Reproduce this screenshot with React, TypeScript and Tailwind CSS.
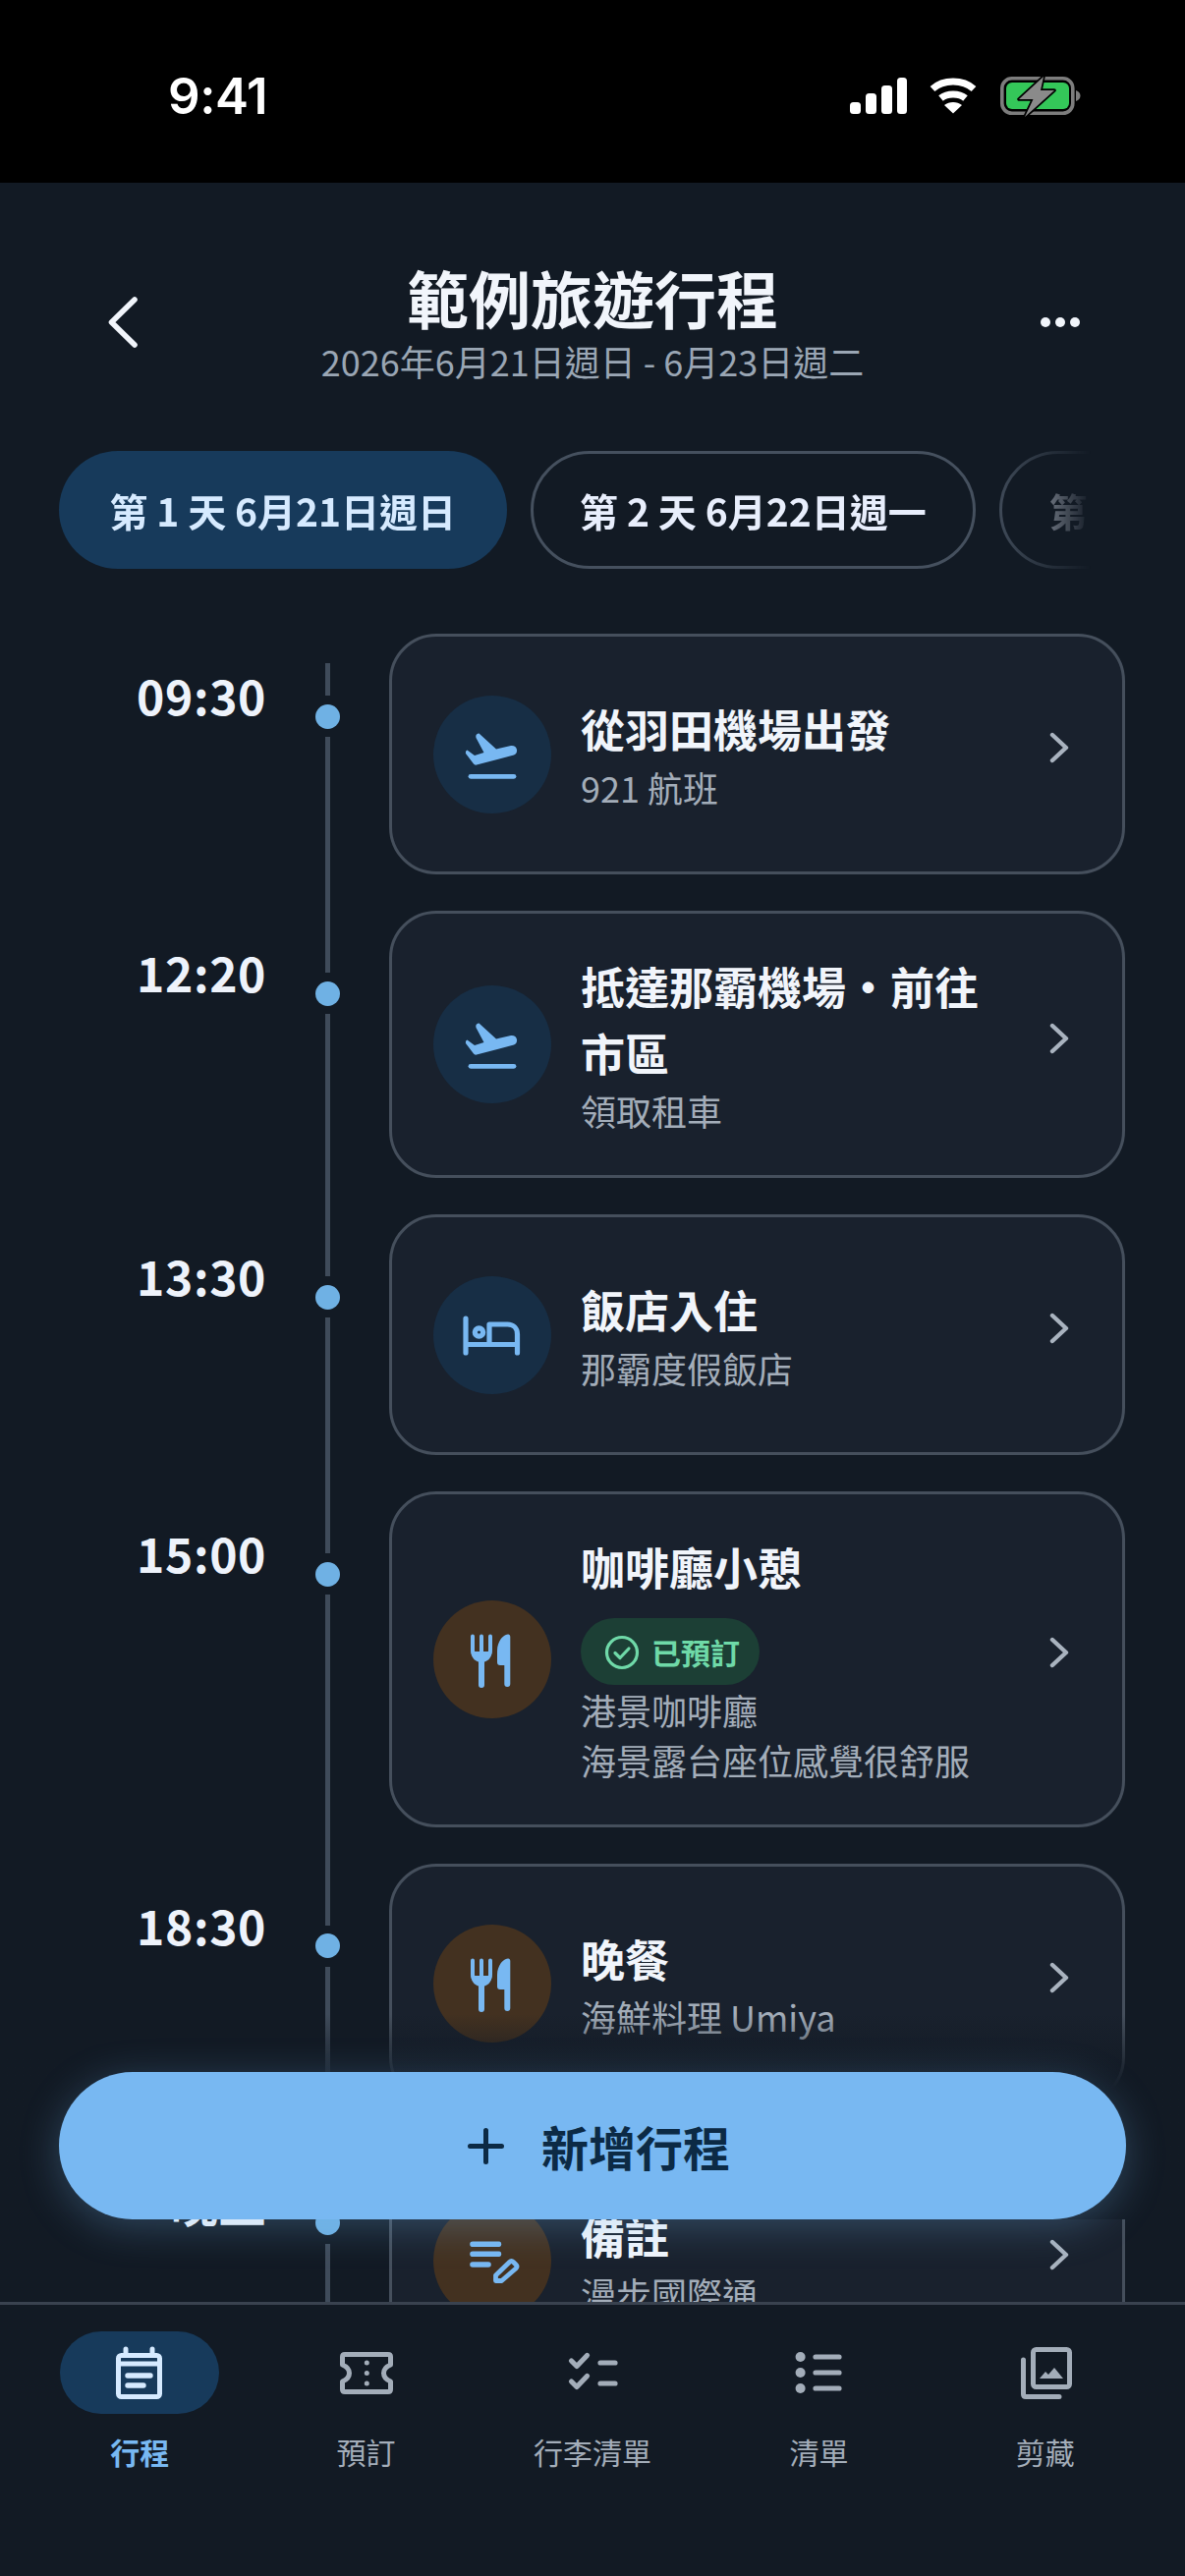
import { ReactNode } from 'react';

const BLUE = '#78b8f2';

const Glyph = ({ size = 60, children, className }: { size?: number; children: ReactNode; className?: string }) => (
  <svg width={size} height={size} viewBox={`0 0 ${size} ${size}`} fill="none" strokeLinecap="round" strokeLinejoin="round" className={className}>
    {children}
  </svg>
);

const PlaneIcon = () => (
  <Glyph>
    <path
      d="M4.500 25.500L12 31l9.500-3L13.500 13q-1-4 3-4.500L34 24.500 49 21q5-.5 6 4 .5 4-3 5.500L14 40.500q-2 .5-3-1L3 29q-.5-3 1.500-3.500z"
      fill={BLUE}
    />
    <path d="M8 52.300h44" stroke={BLUE} strokeWidth="4.800" />
  </Glyph>
);

const BedIcon = () => (
  <Glyph>
    <g stroke={BLUE} strokeWidth="5.200">
      <path d="M3 13v35M3 39.500h52.500V48M55.500 39.500V29c0-6-4-10-10-10H27v20" />
      <circle cx="16.500" cy="27" r="4.200" />
    </g>
  </Glyph>
);

const FoodIcon = () => (
  <Glyph>
    <path d="M10 6.500V21c0 5 4 8 9 8s9-3 9-8V6.500M19 6.500V56" stroke={BLUE} strokeWidth="4" />
    <path d="M19 28v28" stroke={BLUE} strokeWidth="6" />
    <path d="M8.500 22h21c0 7-5 11-10.500 11s-10.500-4-10.500-11z" fill={BLUE} />
    <path
      d="M48.300 7v48a3 3 0 0 1-6 0V36H38a3 3 0 0 1-3-3V21C35 13 40 5.500 46 4.600c1.300-.2 2.300.8 2.300 2.400z"
      fill={BLUE}
    />
  </Glyph>
);

const NoteIcon = () => (
  <Glyph>
    <path d="M10 13.300h26.500M10 23.300h26.500M10 34h16" stroke={BLUE} strokeWidth="5.600" />
    <path d="M33.500 50.500V45L47.500 31.500q2-2 4 0l2.500 2.500q2 2 0 4L39.500 50.500z" stroke={BLUE} strokeWidth="4.800" />
  </Glyph>
);

const Chevron = () => (
  <svg width="24" height="32" viewBox="0 0 24 32" fill="none" className="ml-[28px] mt-[-13px] shrink-0">
    <path d="M5 3l14 13L5 29" stroke="#a9b3bf" strokeWidth="4.400" strokeLinecap="round" strokeLinejoin="round" />
  </svg>
);

const CalendarTab = ({ c }: { c: string }) => (
  <Glyph size={72}>
    <g stroke={c} strokeWidth="5">
      <rect x="14.500" y="18.500" width="42" height="42" rx="3" />
      <path d="M22 12v5M49 12v5M14.500 27h42" />
      <path d="M24 39h23M24 49h16" strokeWidth="5.400" />
    </g>
  </Glyph>
);

const TicketTab = ({ c }: { c: string }) => (
  <Glyph size={72}>
    <path
      d="M14 17.500h44q2.500 0 2.500 2.500v8q-7 3-7 8.500t7 8.500v8q0 2.500-2.500 2.500H14q-2.500 0-2.500-2.500v-8q7-3 7-8.500t-7-8.500v-8q0-2.500 2.500-2.500z"
      stroke={c}
      strokeWidth="5"
    />
    <g fill={c}>
      <circle cx="36.300" cy="26" r="2.500" />
      <circle cx="36.300" cy="36.500" r="2.500" />
      <circle cx="36.300" cy="47" r="2.500" />
    </g>
  </Glyph>
);

const ChecklistTab = ({ c }: { c: string }) => (
  <Glyph size={72}>
    <g stroke={c} strokeWidth="5.200">
      <path d="M14.500 24l5.500 5.500 10.500-11M14.500 45l5.500 5.500 10.500-11" />
      <path d="M44 26h15M44 47h15" />
    </g>
  </Glyph>
);

const ListTab = ({ c }: { c: string }) => (
  <Glyph size={72}>
    <g fill={c}>
      <circle cx="17.600" cy="20" r="5" />
      <circle cx="17.600" cy="36" r="5" />
      <circle cx="17.600" cy="52" r="5" />
    </g>
    <path d="M33 20h24M33 36h24M33 52h24" stroke={c} strokeWidth="5.200" />
  </Glyph>
);

const PhotosTab = ({ c }: { c: string }) => (
  <Glyph size={72}>
    <g stroke={c} strokeWidth="5">
      <rect x="23.500" y="12.500" width="37" height="38" rx="3" />
      <path d="M13.500 23v35q0 2.500 2.500 2.500h34" />
    </g>
    <path d="M30 42l6-7 3 3 6-7 9 11z" fill={c} />
  </Glyph>
);

const ITEMS = [
  { time: '09:30', title: '從羽田機場出發', lines: ['921 航班'], icon: <PlaneIcon />, tone: 'bg-[#172e45]' },
  { time: '12:20', title: '抵達那霸機場・前往市區', lines: ['領取租車'], icon: <PlaneIcon />, tone: 'bg-[#172e45]' },
  { time: '13:30', title: '飯店入住', lines: ['那霸度假飯店'], icon: <BedIcon />, tone: 'bg-[#172e45]' },
  {
    time: '15:00',
    title: '咖啡廳小憩',
    lines: ['港景咖啡廳', '海景露台座位感覺很舒服'],
    icon: <FoodIcon />,
    tone: 'bg-[#433120]',
    booked: true,
  },
  { time: '18:30', title: '晚餐', lines: ['海鮮料理 Umiya'], icon: <FoodIcon />, tone: 'bg-[#433120]' },
  { time: '晚上', title: '備註', lines: ['漫步國際通'], icon: <NoteIcon />, tone: 'bg-[#433120]' },
];

const NAV = [
  { label: '行程', Icon: CalendarTab, active: true },
  { label: '預訂', Icon: TicketTab },
  { label: '行李清單', Icon: ChecklistTab },
  { label: '清單', Icon: ListTab },
  { label: '剪藏', Icon: PhotosTab },
];

export default function App() {
  return (
    <div className="flex h-[2622px] w-[1206px] flex-col overflow-hidden bg-[#121a24] font-['Noto_Sans_CJK_TC','Noto_Sans',sans-serif]">
      {/* Status bar */}
      <div className="flex h-[186px] shrink-0 items-start justify-between bg-black">
        <span className="ml-[171px] mt-[67px] font-['Inter',sans-serif] text-[51px] font-semibold leading-[62px] tracking-[-0.4px] text-white">
          9:41
        </span>
        <svg width="240" height="42" viewBox="0 0 240 42" className="mr-[101px] mt-[77px]">
          <g fill="#fff">
            <rect x="0" y="27" width="11" height="12" rx="3.500" />
            <rect x="16" y="18" width="11" height="21" rx="3.500" />
            <rect x="32" y="10" width="11" height="29" rx="3.500" />
            <rect x="48" y="2" width="10" height="37" rx="3.500" />
          </g>
          <g fill="none" stroke="#fff" strokeWidth="7">
            <path d="M84 13.500c11-10 31-10 42 0" />
            <path d="M92.500 23c6.500-5.500 18.500-5.500 25 0" />
          </g>
          <path d="M96 30c5-4 13-4 18 0l-9 8.500z" fill="#fff" />
          <g transform="translate(153 1)">
            <rect x="1.800" y="1.800" width="72" height="35.500" rx="10" fill="none" stroke="#7d7d7d" strokeWidth="3.600" />
            <rect x="6" y="6" width="64" height="27" rx="6" fill="#34c759" />
            <path d="M77 14c3 1 4.500 3 4.500 5.500S80 24 77 25z" fill="#7d7d7d" />
            <path d="M44 0L19 23h14.500L25 41l30-27H41z" fill="#8a8a8a" stroke="#000" strokeWidth="3.500" paintOrder="stroke" strokeLinejoin="round" />
          </g>
        </svg>
      </div>

      <main className="relative min-h-0 flex-1 overflow-hidden">
        {/* Header */}
        <div className="flex items-center justify-between px-[100px] pt-[75px]">
          <svg width="48" height="60" viewBox="0 0 48 60" fill="none" className="mt-[3px]">
            <path d="M37 7L13.500 30 37 53" stroke="#f1f5fb" strokeWidth="5.600" strokeLinecap="round" strokeLinejoin="round" />
          </svg>
          <div className="flex flex-col items-center">
            <h1 className="text-[63px] font-bold leading-[82px] text-[#f1f5fb]">範例旅遊行程</h1>
            <p className="text-[36px] leading-[49px] text-[#9aa6b4]">2026年6月21日週日 - 6月23日週二</p>
          </div>
          <svg width="48" height="12" viewBox="0 0 48 12" fill="#f1f5fb" className="mt-[3px]">
            <circle cx="6" cy="6" r="5" />
            <circle cx="21" cy="6" r="5" />
            <circle cx="36" cy="6" r="5" />
          </svg>
        </div>

        {/* Day tabs */}
        <div className="ml-[60px] mt-[67px] flex w-[1050px] gap-[24px] overflow-hidden [mask-image:linear-gradient(to_right,black_90%,transparent)]">
          <div className="flex h-[120px] shrink-0 items-center rounded-full bg-[#173a5b] px-[51.500px] text-[39px] font-bold text-[#d6eaff]">
            第 1 天 6月21日週日
          </div>
          <div className="flex h-[120px] shrink-0 items-center rounded-full border-[3px] border-[#45505e] px-[47.500px] text-[39px] font-bold text-[#e8eefc]">
            第 2 天 6月22日週一
          </div>
          <div className="flex h-[120px] shrink-0 items-center rounded-full border-[3px] border-[#45505e] px-[47.500px] text-[39px] font-bold text-[#e8eefc]">
            第 3 天 6月23日週二
          </div>
        </div>

        {/* Timeline */}
        <div className="mt-[66px] flex flex-col pl-[60px]">
          {ITEMS.map((item, i) => (
            <div key={item.time} className="flex items-stretch pb-[37px]">
              <div className="w-[211px] shrink-0 pt-[26px] text-right text-[48px] font-bold leading-[72px] tracking-[0.6px] text-[#eef3fb]">
                {item.time}
              </div>
              <div className="mb-[-37px] ml-[41px] flex w-[42px] shrink-0 flex-col items-center">
                <div className={`w-[5px] bg-[#3f4b5a] ${i === 0 ? 'mt-[30px] h-[33px]' : 'h-[63px]'}`} />
                <div className="my-[8.500px] size-[25px] shrink-0 rounded-full bg-[#6fb1e4]" />
                <div className="w-[5px] flex-1 bg-[#3f4b5a]" />
              </div>
              <div className="ml-[42px] flex min-h-[245px] w-[749px] shrink-0 items-center rounded-[48px] border-[3px] border-[#454f5c] bg-[#19212d] py-[40px] pl-[42px] pr-[52px]">
                <div className={`flex size-[120px] shrink-0 items-center justify-center rounded-full ${item.tone}`}>
                  {item.icon}
                </div>
                <div className="ml-[30px] min-w-0 flex-1">
                  <div className="text-[45px] font-bold leading-[67.500px] text-[#f1f5fb]">{item.title}</div>
                  {item.booked && (
                    <div className="mt-[18px] flex h-[68px] w-[182px] items-center gap-[12px] rounded-full bg-[#1c3f35] pl-[24px] pt-[2px] text-[30px] font-bold text-[#6fd9a8]">
                      <svg width="36" height="36" viewBox="0 0 36 36" fill="none" stroke="#6fd9a8" strokeWidth="3.200" strokeLinecap="round" strokeLinejoin="round">
                        <circle cx="18" cy="18" r="15.500" />
                        <path d="M11 18.500l5 5 9-9.500" />
                      </svg>
                      已預訂
                    </div>
                  )}
                  {item.lines.map((line) => (
                    <div key={line} className="text-[36px] leading-[51px] text-[#a3adb9]">
                      {line}
                    </div>
                  ))}
                </div>
                <Chevron />
              </div>
            </div>
          ))}
        </div>

        {/* Add button over a fade of the list */}
        <div className="absolute bottom-[84px] left-0 right-0 flex h-[209px] items-end bg-linear-to-t from-[#121a24] from-[64%] to-transparent px-[60px]">
          <button className="flex h-[150px] w-[1086px] items-center justify-center gap-[38px] rounded-full bg-[#78b8f2] pl-[13px] text-[48px] font-bold text-[#0c2a45] shadow-[0_8px_40px_rgba(120,184,242,0.28)]">
            <svg width="37" height="37" viewBox="0 0 37 37" stroke="#0c2a45" strokeWidth="5" strokeLinecap="round">
              <path d="M18.500 2.500v32M2.500 18.500h32" />
            </svg>
            新增行程
          </button>
        </div>
      </main>

      {/* Bottom nav */}
      <nav className="z-10 grid h-[279px] shrink-0 grid-cols-5 border-t-[3px] border-[#39424f] bg-[#121a24] px-[27px] pt-[27px]">
        {NAV.map(({ label, Icon, active }) => (
          <div key={label} className="flex flex-col items-center">
            <div className={`flex h-[84px] w-[162px] items-center justify-center rounded-full ${active ? 'bg-[#173a5b]' : ''}`}>
              <Icon c={active ? '#d6eaff' : '#a3adb9'} />
            </div>
            <span className={`mt-[16px] text-[30px] leading-[44px] ${active ? 'font-bold text-[#78b8f2]' : 'text-[#a3adb9]'}`}>
              {label}
            </span>
          </div>
        ))}
      </nav>
    </div>
  );
}
